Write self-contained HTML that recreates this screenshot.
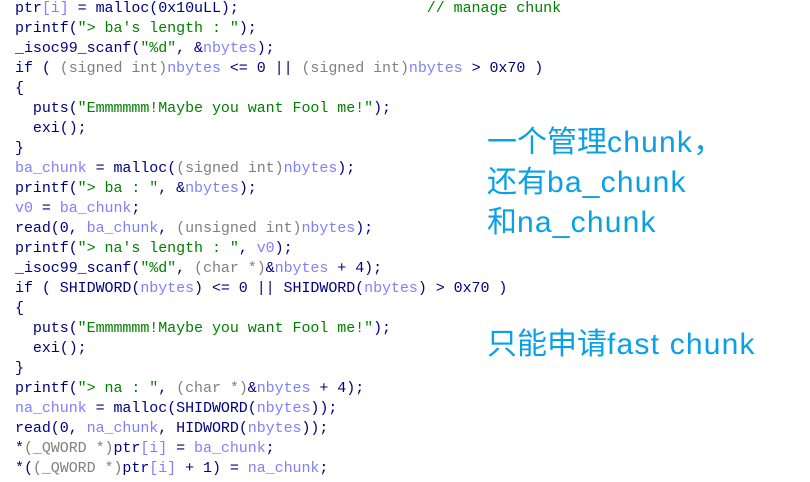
<html><head><style>
body{margin:0;background:#fff;width:810px;height:482px;overflow:hidden;position:relative}
pre{position:absolute;left:15px;top:-1px;margin:0;font:15px/20px "Liberation Mono",monospace;color:#000080;letter-spacing:-0.05px}
.s{color:#008000}.v{color:#8080ff}.t{color:#808080}
.n{position:absolute;left:487px;font:30px/40px "Liberation Sans","Noto Sans CJK SC",sans-serif;color:#0aa0e6;white-space:nowrap}
.l{letter-spacing:1.2px}
</style></head><body>
<pre>ptr<span class="v">[i]</span> = malloc(0x10uLL);                     <span class="s">// manage chunk</span>
printf(<span class="s">"&gt; ba's length : "</span>);
_isoc99_scanf(<span class="s">"%d"</span>, &amp;<span class="v">nbytes</span>);
if ( <span class="t">(signed int)</span><span class="v">nbytes</span> &lt;= 0 || <span class="t">(signed int)</span><span class="v">nbytes</span> &gt; 0x70 )
{
  puts(<span class="s">"Emmmmmm!Maybe you want Fool me!"</span>);
  exi();
}
<span class="v">ba_chunk</span> = malloc(<span class="t">(signed int)</span><span class="v">nbytes</span>);
printf(<span class="s">"&gt; ba : "</span>, &amp;<span class="v">nbytes</span>);
<span class="v">v0</span> = <span class="v">ba_chunk</span>;
read(0, <span class="v">ba_chunk</span>, <span class="t">(unsigned int)</span><span class="v">nbytes</span>);
printf(<span class="s">"&gt; na's length : "</span>, <span class="v">v0</span>);
_isoc99_scanf(<span class="s">"%d"</span>, <span class="t">(char *)</span>&amp;<span class="v">nbytes</span> + 4);
if ( SHIDWORD(<span class="v">nbytes</span>) &lt;= 0 || SHIDWORD(<span class="v">nbytes</span>) &gt; 0x70 )
{
  puts(<span class="s">"Emmmmmm!Maybe you want Fool me!"</span>);
  exi();
}
printf(<span class="s">"&gt; na : "</span>, <span class="t">(char *)</span>&amp;<span class="v">nbytes</span> + 4);
<span class="v">na_chunk</span> = malloc(SHIDWORD(<span class="v">nbytes</span>));
read(0, <span class="v">na_chunk</span>, HIDWORD(<span class="v">nbytes</span>));
*<span class="t">(_QWORD *)</span>ptr<span class="v">[i]</span> = <span class="v">ba_chunk</span>;
*(<span class="t">(_QWORD *)</span>ptr<span class="v">[i]</span> + 1) = <span class="v">na_chunk</span>;</pre>
<div class="n" style="top:123px">一个管理<span class="l">chunk</span>，<br>还有<span class="l">ba_chunk</span><br>和<span class="l">na_chunk</span></div>
<div class="n" style="top:325px">只能申请<span class="l">fast chunk</span></div>
</body></html>
